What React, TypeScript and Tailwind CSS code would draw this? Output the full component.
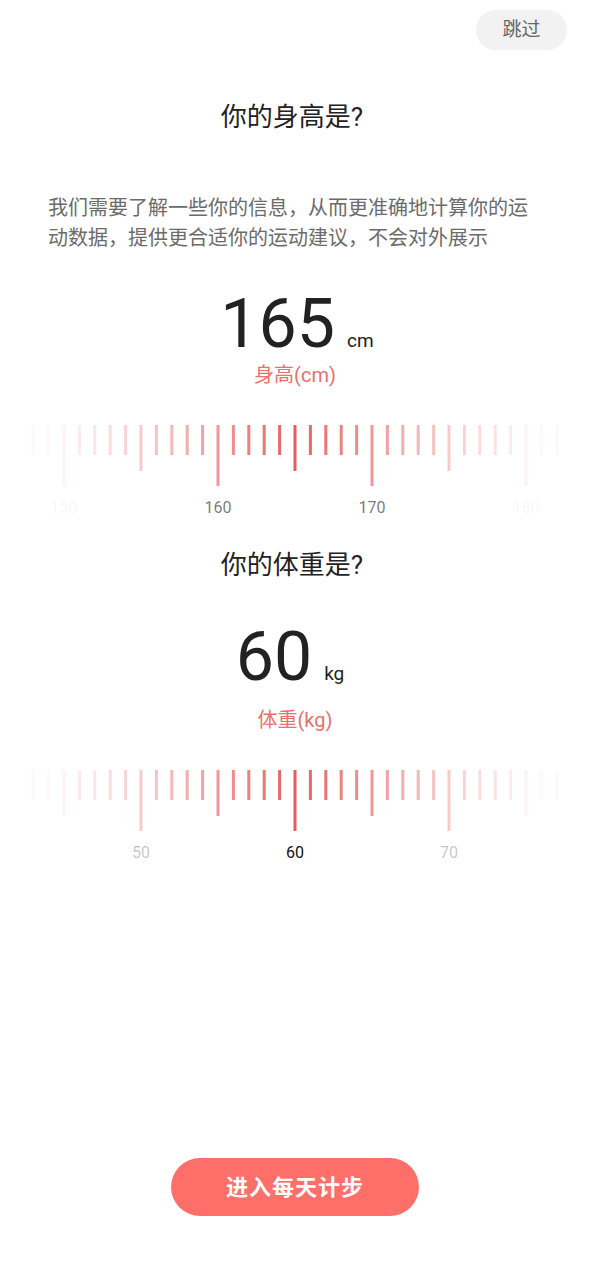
import React from 'react';

const FONT = { fontFamily: 'Roboto, "Noto Sans CJK SC", sans-serif' };

interface RulerProps {
  value: number;
  span?: number;
}

// Tick ruler centred on the current value; ticks and labels fade out towards the edges
const Ruler: React.FC<RulerProps> = ({ value, span = 17 }) => {
  const pitch = 15.4;
  const cx = 295;
  const ticks = [];
  for (let i = -span; i <= span; i++) {
    const v = value + i;
    const d = Math.abs(i);
    const base = Math.max(0, 1 - d / 17.5);
    const len = v % 10 === 0 ? 61 : v % 5 === 0 ? 46 : 30;
    const x = cx + i * pitch;
    ticks.push(
      <line
        key={`t${v}`}
        x1={x}
        x2={x}
        y1={0}
        y2={len}
        stroke="#e85c5c"
        strokeOpacity={Math.max(Math.pow(base, 1.35), 0.04)}
        strokeWidth={3}
      />
    );
    if (v % 10 === 0) {
      ticks.push(
        <text
          key={`l${v}`}
          x={x}
          y={88}
          textAnchor="middle"
          fontSize={16}
          fill="#111"
          fillOpacity={Math.max(Math.pow(base, 1.6), 0.05)}
          style={FONT}
        >
          {v}
        </text>
      );
    }
  }
  return (
    <svg width={590} height={95} viewBox="0 0 590 95" className="block">
      {ticks}
    </svg>
  );
};

const App: React.FC = () => {
  return (
    <div className="min-h-screen w-[590px] bg-white flex flex-col" style={FONT}>
      {/* Skip */}
      <div className="flex justify-end pt-[10px] pr-[23px]">
        <button className="h-10 w-[91px] rounded-full bg-[#f2f2f2] text-[19px] text-[#666]">
          跳过
        </button>
      </div>

      {/* Height */}
      <h1 className="mt-[49px] pr-[6px] text-center text-[26px] leading-[36px] text-[#222]">
        你的身高是?
      </h1>
      <p className="mt-[58px] px-12 text-[20px] leading-[30px] text-[#6b6b6b]">
        我们需要了解一些你的信息，从而更准确地计算你的运动数据，提供更合适你的运动建议，不会对外展示
      </p>

      <div className="mt-[37px] flex items-baseline justify-center gap-3 pl-[4px]">
        <span className="text-[68px] leading-[68px] text-[#222]">165</span>
        <span className="text-[19px] text-[#222]">cm</span>
      </div>
      <div className="mt-[3px] text-center text-[20px] leading-[28px] text-[#e8716d]">身高(cm)</div>

      <div className="mt-[36px]">
        <Ruler value={165} />
      </div>

      {/* Weight */}
      <h2 className="mt-[27px] pr-[6px] text-center text-[26px] leading-[36px] text-[#222]">
        你的体重是?
      </h2>

      <div className="mt-[40px] flex items-baseline justify-center gap-3 pr-[10px]">
        <span className="text-[68px] leading-[68px] text-[#222]">60</span>
        <span className="text-[19px] text-[#222]">kg</span>
      </div>
      <div className="mt-[15px] text-center text-[20px] leading-[28px] text-[#e8716d]">体重(kg)</div>

      <div className="mt-[36px]">
        <Ruler value={60} />
      </div>

      {/* Enter */}
      <div className="mt-auto flex justify-center pb-16">
        <button className="h-[58px] w-[248px] rounded-full bg-[#ff6f69] text-[22px] font-bold tracking-[1px] text-white">
          进入每天计步
        </button>
      </div>
    </div>
  );
};

export default App;
